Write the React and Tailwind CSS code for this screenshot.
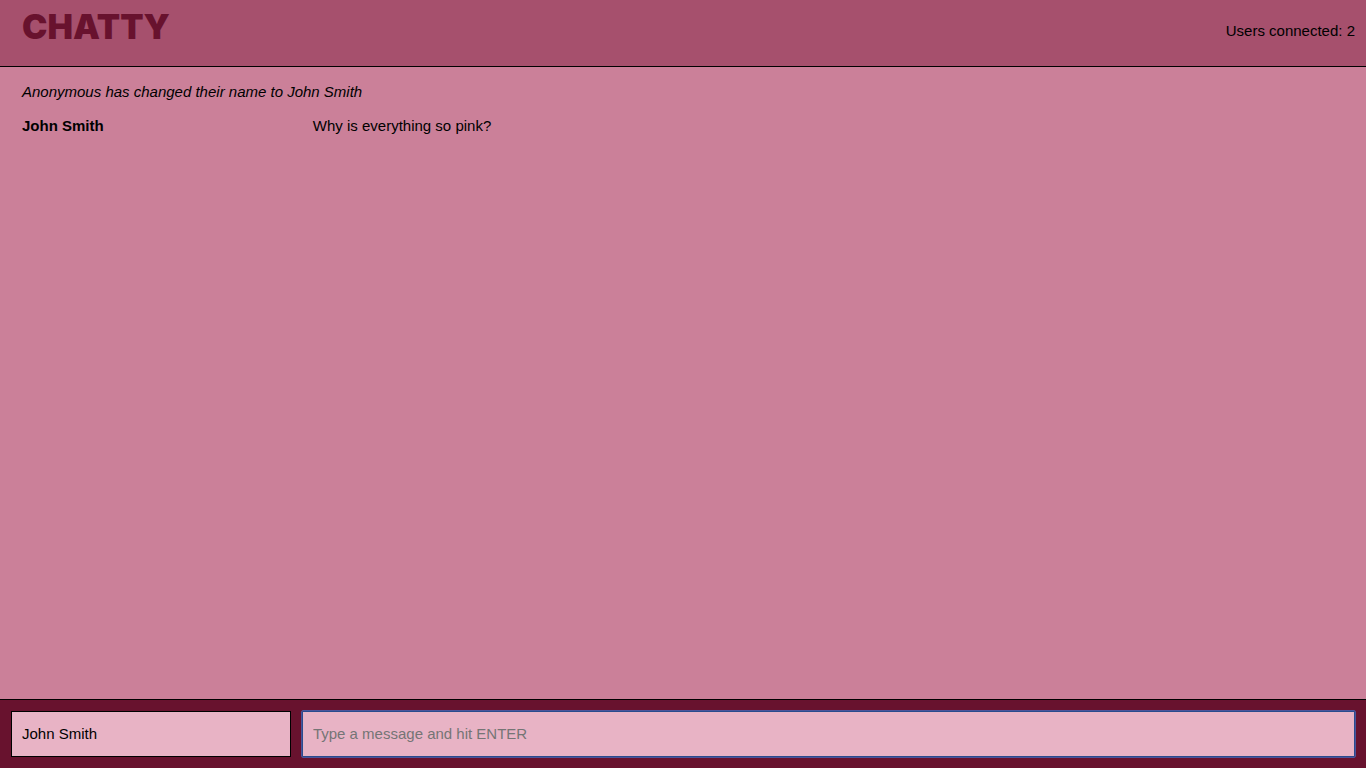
import React, { useState } from "react";

function NavBar({ users }) {
  return (
    <header className="flex h-[67px] shrink-0 items-start justify-between border-b border-black bg-[#a6506d] pl-[22px] pr-[11px]">
      <h1>
        <a
          href="/"
          className="block pt-1 font-[Inter,sans-serif] text-[34px] leading-[46px] font-black text-[#68122e]"
        >
          CHATTY
        </a>
      </h1>
      <p className="pt-5 leading-[22px]">Users connected: {users}</p>
    </header>
  );
}

function MessageList() {
  return (
    <main className="flex flex-1 flex-col gap-3 overflow-y-auto px-[22px] pt-[14px] leading-[22px]">
      <p className="italic">Anonymous has changed their name to John Smith</p>
      <div className="flex">
        <span className="w-[22%] font-bold">John Smith</span>
        <span className="flex-1">Why is everything so pink?</span>
      </div>
    </main>
  );
}

function ChatBar() {
  const [name, setName] = useState("John Smith");
  const [message, setMessage] = useState("");
  return (
    <footer className="grid shrink-0 grid-cols-[21fr_79fr] gap-[11px] border-t border-black bg-[#68122e] p-[11px]">
      <input
        aria-label="Your name"
        className="h-[46px] w-full min-w-0 border border-black bg-[#e8b3c5] px-[10px] pb-0.5 outline-none"
        value={name}
        onChange={(e) => setName(e.target.value)}
      />
      <input
        aria-label="Message"
        className="h-[46px] w-full min-w-0 rounded-[1px] border border-[#2a4b8d] bg-[#e8b3c5] px-[10px] pb-0.5 outline-1 outline-[#4a549b] placeholder:text-[#757575]"
        placeholder="Type a message and hit ENTER"
        value={message}
        onChange={(e) => setMessage(e.target.value)}
      />
    </footer>
  );
}

export default function App() {
  return (
    <div className="flex h-screen flex-col bg-[#cb8099] font-['Liberation_Sans',Arial,sans-serif] text-[15px] text-black">
      <NavBar users={2} />
      <MessageList />
      <ChatBar />
    </div>
  );
}
